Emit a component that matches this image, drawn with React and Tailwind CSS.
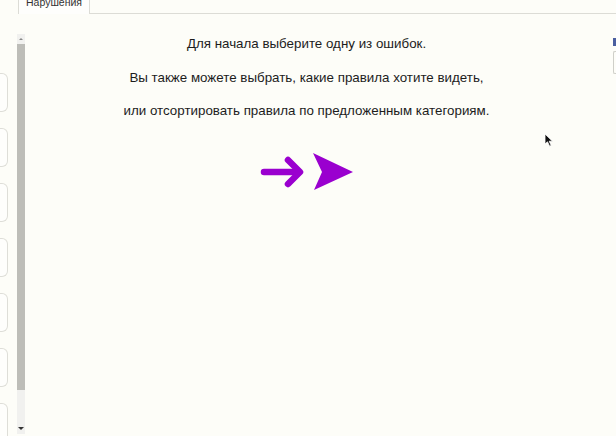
import React from 'react';

const cards = [0, 1, 2, 3, 4, 5, 6];

const App = () => {
  return (
    <div className="w-[616px] h-[436px] overflow-hidden bg-[#fdfdf8] text-[#1c1c1c] relative" style={{ fontFamily: '"Liberation Sans", Arial, sans-serif' }}>
      {/* Tabs strip */}
      <div className="flex h-[14px]">
        <div className="w-[18px]" />
        <div className="w-[72px] h-[14px] border-l border-r border-[#dcdcd6] bg-[#fefefc] flex items-end justify-center overflow-hidden">
          <span className="text-[10.5px] leading-[13px] text-[#333] -translate-y-[5px]">Нарушения</span>
        </div>
        <div className="flex-1 border-b border-[#dcdcd6]" />
      </div>

      <div className="flex h-[422px]">
        {/* Left list, mostly scrolled out of view */}
        <div className="w-[17px] overflow-hidden flex flex-col gap-[16px] pt-[59px]">
          {cards.map((c) => (
            <div key={c} className="w-[8px] h-[39px] shrink-0 border border-l-0 border-[#deded8] rounded-r-[6px] bg-[#fefefc]" />
          ))}
        </div>

        {/* Scrollbar */}
        <div className="w-[8px] flex flex-col pt-[20px] pb-[2px]">
          <div className="h-[10px] bg-[#f1f1ef] flex items-center justify-center">
            <div className="w-0 h-0 border-l-[2px] border-r-[2px] border-b-[2px] border-l-transparent border-r-transparent border-b-[#888]" />
          </div>
          <div className="h-[346px] bg-[#bdbdb8]" />
          <div className="flex-1 bg-[#f1f1ef] flex items-end justify-center pb-[4px]">
            <div className="w-0 h-0 border-l-[3px] border-r-[3px] border-t-[3px] border-l-transparent border-r-transparent border-t-[#333]" />
          </div>
        </div>

        {/* Main message */}
        <div className="w-[563px] flex flex-col items-center pt-[22px]">
          <div className="flex flex-col items-center gap-[17.5px] text-[13.35px] leading-[16px]">
            <p>Для начала выберите одну из ошибок.</p>
            <p>Вы также можете выбрать, какие правила хотите видеть,</p>
            <p>или отсортировать правила по предложенным категориям.</p>
          </div>
          <svg className="mt-[31px]" width="98" height="42" viewBox="0 0 98 42">
            <g fill="none" stroke="#9a00cf" strokeWidth="6.5" strokeLinecap="round" strokeLinejoin="round">
              <line x1="6" y1="22" x2="40" y2="22" />
              <polyline points="30,10 42,22 30,34" />
            </g>
            <polygon points="55,3 95,22 56,40 64,22" fill="#9a00cf" />
          </svg>
        </div>

        {/* Right panel edge */}
        <div className="flex-1 flex flex-col items-end pt-[24px]">
          <div className="w-[3px] h-[8px] bg-[#4a5fa0]" />
          <div className="w-[3px] h-[23px] mt-[5px] border-l border-t border-b border-[#cfcfc9] rounded-l-[2px]" />
        </div>
      </div>

      {/* Mouse pointer */}
      <svg className="absolute left-[544px] top-[133px]" width="10" height="15" viewBox="0 0 10 15">
        <path d="M1 1 L1 11 L3.5 8.8 L5.6 13.2 L7.2 12.4 L5.2 8.2 L8.5 8.2 Z" fill="#111" stroke="#fff" strokeWidth="0.8" />
      </svg>
    </div>
  );
};

export default App;
